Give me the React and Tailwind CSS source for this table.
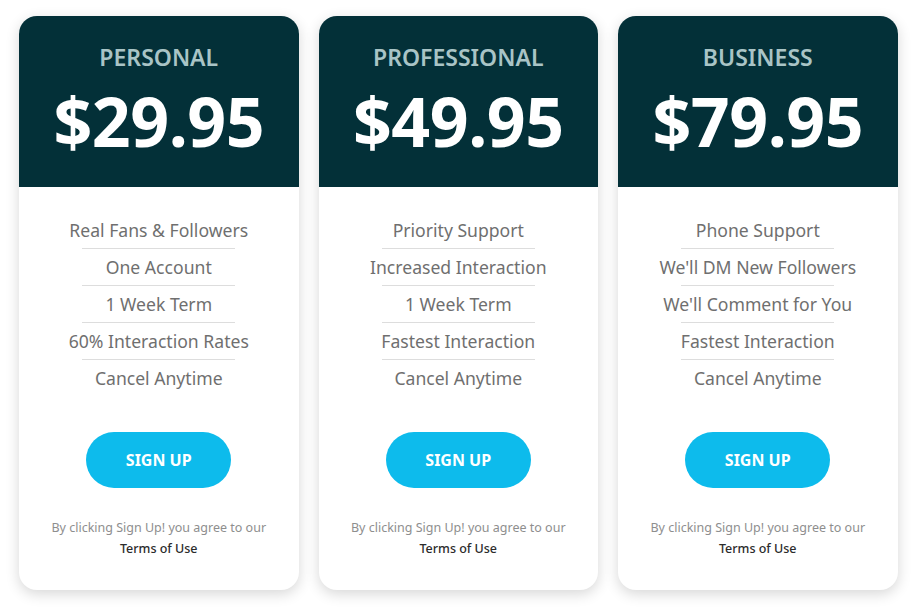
import React from "react";

const plans = [
  {
    name: "PERSONAL",
    price: "$29.95",
    features: ["Real Fans & Followers", "One Account", "1 Week Term", "60% Interaction Rates", "Cancel Anytime"],
  },
  {
    name: "PROFESSIONAL",
    price: "$49.95",
    features: ["Priority Support", "Increased Interaction", "1 Week Term", "Fastest Interaction", "Cancel Anytime"],
  },
  {
    name: "BUSINESS",
    price: "$79.95",
    features: ["Phone Support", "We'll DM New Followers", "We'll Comment for You", "Fastest Interaction", "Cancel Anytime"],
  },
];

function PlanCard({ plan }) {
  return (
    <div className="w-[279.5px] h-[574px] bg-white rounded-[18px] shadow-[0_4px_14px_rgba(0,0,0,0.16)] overflow-hidden flex flex-col">
      <div className="h-[171px] bg-[#033038] flex flex-col items-center pt-[27px]">
        <h2 className="text-[23px] leading-[28px] font-semibold text-[#a9c4c6]">{plan.name}</h2>
        <div className="mt-[14px] text-[68px] leading-[72px] font-bold text-white tracking-[-0.5px]">{plan.price}</div>
      </div>
      <ul className="flex flex-col items-center pt-[25px]">
        {plan.features.map((f, i) => (
          <li
            key={f}
            className={
              "w-[153px] flex justify-center whitespace-nowrap text-[17.6px] leading-[36px] text-[#6f6f6f] " +
              (i < plan.features.length - 1 ? "border-b border-[#dddddd]" : "")
            }
          >
            {f}
          </li>
        ))}
      </ul>
      <div className="flex justify-center mt-[36px]">
        <button className="w-[145px] h-[56px] rounded-full bg-[#0dbbec] text-white text-[16px] font-bold">
          SIGN UP
        </button>
      </div>
      <div className="mt-[29px] text-center text-[12.5px] leading-[21px]">
        <p className="text-[#8e8e8e]">By clicking Sign Up! you agree to our</p>
        <p className="text-[#2b2b2b] font-medium">Terms of Use</p>
      </div>
    </div>
  );
}

export default function App() {
  return (
    <div className="min-h-screen bg-white font-['Noto_Sans',sans-serif]">
      <div className="flex gap-5 pl-[19px] pt-4">
        {plans.map((p) => (
          <PlanCard key={p.name} plan={p} />
        ))}
      </div>
    </div>
  );
}
